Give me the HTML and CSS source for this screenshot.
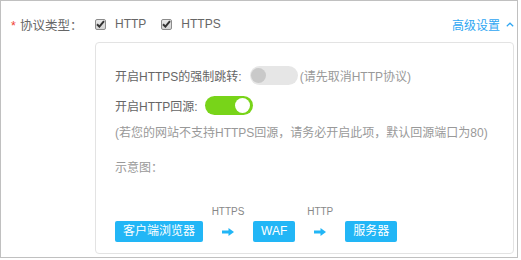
FILE: index.html
```html
<!DOCTYPE html>
<html lang="zh-CN">
<head>
    <meta charset="UTF-8">
    <meta name="viewport" content="width=device-width, initial-scale=1.0">
    <title>协议类型</title>
    <link rel="stylesheet" href="styles.css">
</head>
<body>

    <div class="frame">
        <div class="protocol-row">
            <div class="form-label"><span class="required">*</span>协议类型：</div>
            <label class="check">
                <span class="check-box">
                    <svg width="9" height="8" viewBox="0 0 9 8"><path d="M1 4.2 L3.4 6.6 L8 1.2" fill="none" stroke="#333" stroke-width="2"/></svg>
                </span>
                HTTP
            </label>
            <label class="check">
                <span class="check-box">
                    <svg width="9" height="8" viewBox="0 0 9 8"><path d="M1 4.2 L3.4 6.6 L8 1.2" fill="none" stroke="#333" stroke-width="2"/></svg>
                </span>
                HTTPS
            </label>
            <a class="advanced">高级设置
                <svg width="8" height="5" viewBox="0 0 8 5"><path d="M0.8 4.3 L4 1.2 L7.2 4.3" fill="none" stroke="#2ea6f2" stroke-width="1.2"/></svg>
            </a>
        </div>

        <div class="card">
            <div class="switch-row">
                <span>开启HTTPS的强制跳转:</span>
                <span class="switch"><span class="knob"></span></span>
                <span class="hint">(请先取消HTTP协议)</span>
            </div>
            <div class="switch-row">
                <span>开启HTTP回源:</span>
                <span class="switch on"><span class="knob"></span></span>
            </div>
            <p class="hint note">(若您的网站不支持HTTPS回源，请务必开启此项，默认回源端口为80)</p>

            <p class="hint diagram-title">示意图：</p>

            <div class="diagram">
                <span class="node">客户端浏览器</span>
                <div class="link">
                    <span class="link-label">HTTPS</span>
                    <span class="arrow">
                        <svg width="12" height="8" viewBox="0 0 12 8"><path d="M0 2.6 H6.5 V0 L12 4 L6.5 8 V5.4 H0 Z" fill="#22b6f6"/></svg>
                    </span>
                </div>
                <span class="node">WAF</span>
                <div class="link">
                    <span class="link-label">HTTP</span>
                    <span class="arrow">
                        <svg width="12" height="8" viewBox="0 0 12 8"><path d="M0 2.6 H6.5 V0 L12 4 L6.5 8 V5.4 H0 Z" fill="#22b6f6"/></svg>
                    </span>
                </div>
                <span class="node">服务器</span>
            </div>
        </div>
    </div>

</body>
</html>
```

FILE: styles.css
```css
body {
    margin: 0;
    font-family: "Liberation Sans", "Noto Sans CJK SC", sans-serif;
    font-size: 12px;
    color: #666;
    background-color: #fff;
}

.frame {
    width: 518px;
    height: 258px;
    box-sizing: border-box;
    border: 1px solid #c0c0c0;
    padding-top: 13px;
}

.protocol-row {
    display: flex;
    align-items: center;
    height: 20px;
    margin-right: 3px;
}

.form-label {
    width: 94px;
    padding-left: 10px;
    box-sizing: border-box;
    font-size: 12.5px;
}

.required {
    color: #f04134;
    margin-right: 4px;
}

.check {
    display: flex;
    align-items: center;
    margin-right: 15px;
}

.check-box {
    width: 9px;
    height: 9px;
    border: 1px solid #8c8c8c;
    border-radius: 2px;
    background: linear-gradient(#e8e8e8, #d4d4d4);
    margin-right: 9px;
    display: flex;
    align-items: center;
    justify-content: center;
}

.advanced {
    margin-left: auto;
    color: #2ea6f2;
    display: flex;
    align-items: center;
    gap: 6px;
}

.card {
    margin: 8px 3px 0 94px;
    height: 212px;
    box-sizing: border-box;
    border: 1px solid #e3e3e3;
    border-radius: 4px;
    padding: 22px 0 0 19px;
}

.switch-row {
    display: flex;
    align-items: center;
    height: 20px;
    margin-bottom: 10px;
}

.switch-row:last-of-type {
    margin-bottom: 0;
}

.switch {
    position: relative;
    width: 48px;
    height: 19px;
    border-radius: 10px;
    background-color: #e6e6e6;
    margin: 0 2px 0 8px;
}

.switch .knob {
    position: absolute;
    top: 2px;
    left: 1px;
    width: 15px;
    height: 15px;
    border-radius: 50%;
    background-color: #c9c9c9;
}

.switch.on {
    background-color: #78d419;
    margin-left: 7px;
}

.switch.on .knob {
    left: auto;
    right: 3px;
    background-color: #fff;
}

.hint {
    color: #999;
}

p {
    margin: 0;
}

.note {
    line-height: 16px;
    margin-top: 5px;
}

.diagram-title {
    line-height: 16px;
    margin-top: 19px;
}

.diagram {
    display: flex;
    align-items: flex-end;
    margin-top: 30px;
}

.node {
    background-color: #22b6f6;
    color: #fff;
    border-radius: 2px;
    padding: 0 8px;
    height: 21px;
    line-height: 21px;
}

.link {
    width: 50px;
    display: flex;
    flex-direction: column;
    align-items: center;
}

.link-label {
    font-size: 10px;
    line-height: 12px;
    color: #888;
    margin-bottom: 3px;
}

.arrow {
    height: 21px;
    display: flex;
    align-items: center;
}
```
